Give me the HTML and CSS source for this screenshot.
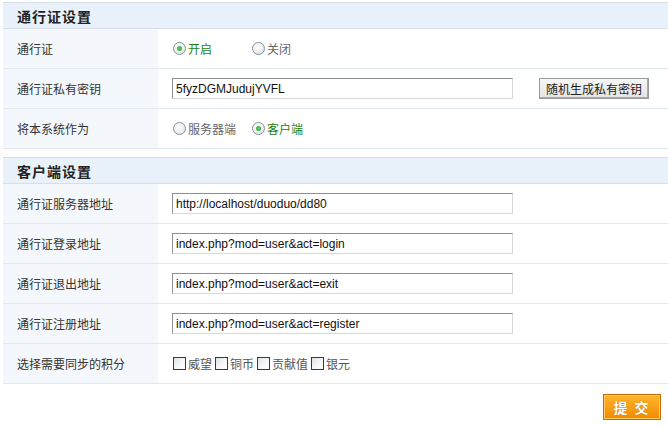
FILE: index.html
```html
<!DOCTYPE html>
<html lang="zh-CN">
<head>
<meta charset="utf-8">
<title>通行证设置</title>
<link rel="stylesheet" href="styles.css">
</head>
<body>
<form class="page">
  <section class="section">
    <div class="section-head">通行证设置</div>
    <div class="row">
      <div class="label">通行证</div>
      <div class="value">
        <label class="opt on"><input type="radio" name="pass" class="radio" checked>开启</label>
        <label class="opt off gap-lg"><input type="radio" name="pass" class="radio">关闭</label>
      </div>
    </div>
    <div class="row">
      <div class="label">通行证私有密钥</div>
      <div class="value">
        <input type="text" class="text" value="5fyzDGMJudujYVFL">
        <button type="button" class="btn-gray">随机生成私有密钥</button>
      </div>
    </div>
    <div class="row">
      <div class="label">将本系统作为</div>
      <div class="value">
        <label class="opt off"><input type="radio" name="role" class="radio">服务器端</label>
        <label class="opt on gap-sm"><input type="radio" name="role" class="radio" checked>客户端</label>
      </div>
    </div>
  </section>

  <section class="section second">
    <div class="section-head">客户端设置</div>
    <div class="row">
      <div class="label">通行证服务器地址</div>
      <div class="value"><input type="text" class="text" value="http://localhost/duoduo/dd80"></div>
    </div>
    <div class="row">
      <div class="label">通行证登录地址</div>
      <div class="value"><input type="text" class="text" value="index.php?mod=user&amp;act=login"></div>
    </div>
    <div class="row">
      <div class="label">通行证退出地址</div>
      <div class="value"><input type="text" class="text" value="index.php?mod=user&amp;act=exit"></div>
    </div>
    <div class="row">
      <div class="label">通行证注册地址</div>
      <div class="value"><input type="text" class="text" value="index.php?mod=user&amp;act=register"></div>
    </div>
    <div class="row">
      <div class="label">选择需要同步的积分</div>
      <div class="value checks">
        <label class="chk"><input type="checkbox" class="box">威望</label>
        <label class="chk"><input type="checkbox" class="box">铜币</label>
        <label class="chk"><input type="checkbox" class="box">贡献值</label>
        <label class="chk"><input type="checkbox" class="box">银元</label>
      </div>
    </div>
  </section>

  <div class="actions">
    <button type="submit" class="btn-submit">提 交</button>
  </div>
</form>
</body>
</html>
```

FILE: styles.css
```css
* { box-sizing: border-box; }

html, body {
  margin: 0;
  padding: 0;
  background: #ffffff;
}

body {
  font-family: "Noto Sans CJK SC", "Liberation Sans", sans-serif;
  font-size: 12px;
  color: #333333;
}

.page {
  padding: 2px 0 0 3px;
  display: flex;
  flex-direction: column;
}

.section {
  display: flex;
  flex-direction: column;
}

.second {
  margin-top: 8px;
}

.section-head {
  height: 27px;
  border-top: 1px solid #d6dfe9;
  border-bottom: 1px solid #d6dfe9;
  background: #e9f1fa;
  padding-left: 14px;
  display: flex;
  align-items: center;
  font-size: 14px;
  font-weight: bold;
  letter-spacing: 1px;
  color: #222222;
}

.row {
  display: flex;
  height: 40px;
  border-bottom: 1px solid #e1e8f0;
}

.label {
  width: 155px;
  flex: none;
  background: #f4f8fc;
  padding-left: 14px;
  display: flex;
  align-items: center;
  color: #333333;
}

.value {
  flex: 1;
  display: flex;
  align-items: center;
  padding-left: 14px;
}

.opt {
  display: flex;
  align-items: center;
}

.opt.on { color: #1f7d12; }
.opt.off { color: #666666; }

.gap-lg { margin-left: 39px; }
.gap-sm { margin-left: 15px; }

.radio {
  appearance: none;
  -webkit-appearance: none;
  width: 13px;
  height: 13px;
  margin: 0 2px 0 1px;
  border-radius: 50%;
  border: 1px solid #8094a8;
  background: radial-gradient(circle at 40% 35%, #ffffff 0%, #f0f0f0 50%, #d2d6da 100%);
  position: relative;
}

.radio:checked::after {
  content: "";
  position: absolute;
  left: 3px;
  top: 3px;
  width: 5px;
  height: 5px;
  border-radius: 50%;
  background: radial-gradient(circle, #5fd16a 0%, #2a9a32 100%);
}

.text {
  width: 341px;
  height: 21px;
  margin: 0;
  padding: 0 0 0 3px;
  border: 1px solid;
  border-color: #8f8f8f #d8d8d8 #d8d8d8 #8f8f8f;
  font-family: "Liberation Sans", Arial, sans-serif;
  font-size: 12px;
  color: #111111;
  background: #ffffff;
}

.btn-gray {
  margin-left: 26px;
  height: 21px;
  width: 110px;
  padding: 0;
  border: 1px solid;
  border-color: #f4f4f4 #6f6f6f #6f6f6f #f4f4f4;
  outline: 1px solid #9a9a9a;
  outline-offset: -1px;
  background: linear-gradient(#f7f7f7, #e4e4e4);
  font-family: "Noto Sans CJK SC", sans-serif;
  font-size: 12px;
  color: #222222;
  box-shadow: inset -1px -1px 0 #a8a8a8;
}

.checks {
  gap: 2px;
}

.chk {
  display: flex;
  align-items: center;
  color: #555555;
}

.box {
  appearance: none;
  -webkit-appearance: none;
  width: 13px;
  height: 13px;
  margin: 0 2px 0 1px;
  border: 1px solid #1f3f5c;
  background: linear-gradient(135deg, #dfe3e7 0%, #f7f8f9 60%, #ffffff 100%);
}

.actions {
  display: flex;
  justify-content: flex-end;
  padding: 10px 7px 0 0;
}

.btn-submit {
  width: 58px;
  height: 26px;
  padding: 0;
  border: 1px solid #c86a00;
  box-shadow: inset 0 0 0 1px #ffc860;
  background: linear-gradient(#ffb52e, #f08a00);
  color: #ffffff;
  font-family: "Noto Sans CJK SC", sans-serif;
  font-size: 14px;
  font-weight: bold;
  letter-spacing: 2px;
  text-shadow: 0 0 1px #b06000;
}
```
